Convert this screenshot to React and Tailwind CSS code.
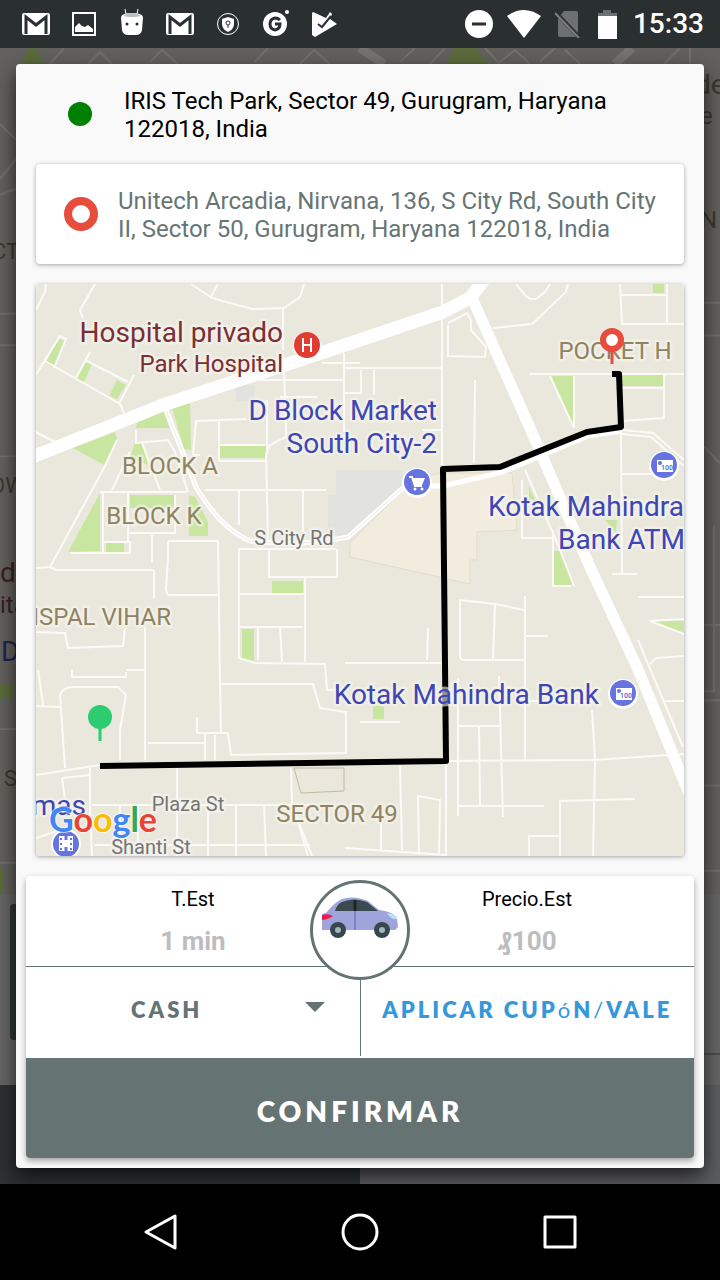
import React, { useState } from 'react';

const parks = [
    '58,338 66,342 54,367 46,363',
    '85,362 92,364 84,382 76,379',
    '117,380 126,385 117,399 109,396',
    '73,448 115,432 117,438 104,465',
    '137,423 165,410 168,425 171,428 136,428',
    '172,408 190,403 191,450 184,449',
    '135,443 142,443 148,465 130,458',
    '220,446 266,446 265,458 220,458',
    '100,493 100,551 68,552',
    '130,495 174,495 174,508 130,508',
    '189,495 195,497 208,522 208,536 189,536',
    '106,542 124,542 124,552 106,552',
    '653,284 664,284 664,293 653,293',
    '551,376 574,376 573,427',
    '622,374 663,374 663,386 622,386',
    '554,551 561,551 573,583 570,586 554,586',
    '529,486 536,502 529,500',
    '605,520 617,520 616,533',
    '272,581 303,581 303,593 272,593',
    '242,629 254,629 254,661 242,659',
    '373,706 384,706 384,719 373,719',
    '653,621 684,621 684,633'
];

const streets = [
    'M36 310 45 292 46 284M95 284 80 310 83 318M36 432 55 442M191 284 212 298 252 309 284 308 300 297 304 284M210 298 218 284',
    'M283 308V350M284 370 286 430M36 375 45 360 60 336 66 339 54 368M45 361 120 404 124 413M76 378 90 352M85 360 128 382M134 375 119 404',
    'M258 380H345M322 363H360M344 353V432M345 368H443M345 393H360M280 397H317M247 419 196 421 193 455M219 420V461M219 445H265M219 461H265',
    'M286 430V437L270 445 266 455 268 540M267 400V450M205 490H326M239 490V525M303 490V532M193 455H200',
    'M117 440 105 466 50 567 36 568M50 567 56 570 153 570M136 430V443L168 440 175 452 188 492M142 443 160 490M130 452 112 490',
    'M100 492H187M103 493V552M70 553H130V542H103M128 493V542M128 533H175V495M152 535V562M168 541H218M168 541V558L166 590 168 595H217',
    'M218 541 220 684 221 733M154 570V598M145 627V760M36 632 65 633 68 648 123 646 125 628M72 670V677H126V672M126 670H144',
    'M65 768 60 695Q62 688 72 687L118 687 126 695 120 730V760M36 706 60 707M38 670 43 705M36 775 100 765M197 717V733H228L231 755 346 753V712L320 708 313 684H221M148 743H204M205 733V760M215 735V760',
    'M239 548V658L255 663 325 664 327 690H345M240 594H305M240 549H336M269 549V577H337V549M305 577V662M240 627H303M258 627V660M280 627 282 662',
    'M177 767V856M90 768V805L92 856M62 778 90 775M62 778 65 800M92 805H310M291 768 292 805 312 856M296 815 308 856M236 804V856M264 804 266 856M208 804V856M95 845H310M36 838 60 830M120 806V845M138 806V845',
    'M460 658V600L495 604 524 610M460 658 463 660H524M495 604 493 659M525 596V760M525 636H548M446 761 593 760 684 754M592 710 595 760 593 856M446 761V856',
    'M458 678V816M499 676 503 817M458 726H502M479 726 480 805M458 806H544M635 799 560 801V856M560 836H529V856M400 766 402 850M419 855 418 796 440 800 439 855M345 848 446 855M381 815V850',
    'M345 663H443M428 628 427 660M360 722H400M638 597H684M684 634 650 621 684 619M638 640 683 747M650 664 656 658 684 656M665 701H684M612 574H637M621 430 622 573M525 701H592',
    'M442 284V465M516 284 525 295 530 299H536L545 292 550 284M568 284 566 292 532 324 493 328M620 284 622 324H684M620 295H667M667 284V323M529 374H684M574 376V428L550 376',
    'M664 375V418L622 421M622 388H664M448 325V356L485 357 486 347 471 330V320L467 313 448 323M475 380 474 463M622 430 653 433 684 460M622 434 651 437 684 466M622 474H660M361 370V394M374 370V395',
    'M522 480V538H553V586L571 586M553 530V560M525 470 556 540 574 586M422 430H443'
];

const labels = [
    { text: 'Hospital privado', x: 283, y: 342, anchor: 'end', kind: 'hospital', size: 28 },
    { text: 'Park Hospital', x: 283, y: 372, anchor: 'end', kind: 'hospital', size: 24 },
    { text: 'D Block Market', x: 437, y: 420, anchor: 'end', kind: 'place', size: 28 },
    { text: 'South City-2', x: 437, y: 453, anchor: 'end', kind: 'place', size: 28 },
    { text: 'Kotak Mahindra', x: 684, y: 516, anchor: 'end', kind: 'place', size: 28 },
    { text: 'Bank ATM', x: 685, y: 549, anchor: 'end', kind: 'place', size: 28 },
    { text: 'Kotak Mahindra Bank', x: 599, y: 704, anchor: 'end', kind: 'place', size: 28 },
    { text: 'mas', x: 86, y: 815, anchor: 'end', kind: 'place', size: 28 },
    { text: 'BLOCK A', x: 170, y: 474, anchor: 'middle', kind: 'area', size: 24 },
    { text: 'BLOCK K', x: 154, y: 524, anchor: 'middle', kind: 'area', size: 24 },
    { text: 'POCKET H', x: 615, y: 359, anchor: 'middle', kind: 'area', size: 24 },
    { text: 'ISPAL VIHAR', x: 171, y: 625, anchor: 'end', kind: 'area', size: 24 },
    { text: 'SECTOR 49', x: 337, y: 822, anchor: 'middle', kind: 'area', size: 24 },
    { text: 'S City Rd', x: 294, y: 545, anchor: 'middle', kind: 'street', size: 20 },
    { text: 'Plaza St', x: 188, y: 811, anchor: 'middle', kind: 'street', size: 20 },
    { text: 'Shanti St', x: 151, y: 854, anchor: 'middle', kind: 'street', size: 20 }
];

const labelColors = {
    hospital: '#7a2f33',
    place: '#3c46b4',
    area: '#8f8360',
    street: '#757575'
};

function RouteMap() {
    return (
        <svg viewBox="36 284 648 572" className="block w-full h-auto font-[Roboto,sans-serif]" role="img" aria-label="Mapa de la ruta">
            <rect x="36" y="284" width="648" height="572" fill="#eae8dd" />
            <polygon points="336,470 402,470 403,487 360,530 345,540 328,530 328,495 336,495" fill="#e2e3de" />
            <rect x="236" y="385" width="18" height="16" fill="#e2e3de" />
            {parks.map(points => <polygon key={points} points={points} fill="#c8e6a0" />)}
            <polygon points="443,473 512,473 517,530 477,532 477,560 470,560 470,584 350,557 350,543 403,490 403,480" fill="#f1ecde" stroke="#e4dccb" />
            <g fill="none" stroke="#fbfaf7" strokeWidth="2">
                {streets.map(d => <path key={d} d={d} />)}
            </g>
            <g fill="none" strokeLinejoin="round">
                <path d="M165 408 185 458 196 487Q220 528 250 541 300 547 348 537L405 486H443L503 472 588 436 622 431" stroke="#fff" strokeWidth="5" />
                <path d="M165 408 185 458 196 487Q220 528 250 541 300 547 348 537L405 486" stroke="#eceae3" strokeWidth="1" />
                <path d="M30 458 163 405 300 360 360 340 443 312 470 298 484 280" stroke="#fff" strokeWidth="13" />
                <path d="M472 298 530 428 590 567 637 667 690 796" stroke="#fff" strokeWidth="11" />
                <path d="M294 768H344V791L301 793Z" stroke="#c2baa0" />
            </g>

            <path d="M612 374H619L621 427 587 432 500 467 443 469 446 761 100 766" fill="none" stroke="#000" strokeWidth="6" strokeLinejoin="round" />

            {/* Labels */}
            {labels.map(label => (
                <text
                    key={label.text}
                    x={label.x}
                    y={label.y}
                    textAnchor={label.anchor}
                    fontSize={label.size}
                    fill={labelColors[label.kind]}
                    stroke="#f6f5ef"
                    strokeOpacity="0.6"
                    strokeWidth="5"
                    strokeLinejoin="round"
                    paintOrder="stroke"
                >
                    {label.text}
                </text>
            ))}

            {/* Hospital */}
            <circle cx="307" cy="346" r="14" fill="#fff" />
            <circle cx="307" cy="345" r="13" fill="#e03c31" />
            <path d="M303 338V352M311 338V352M303 345H311" stroke="#fff" strokeWidth="2" />

            {/* Market */}
            <circle cx="417" cy="483" r="15" fill="#fff" />
            <circle cx="417" cy="482" r="13" fill="#6674e0" />
            <path d="M409 477H412L415 486H422" stroke="#fff" strokeWidth="2" fill="none" />
            <path d="M412 478H425L422 485H414Z" fill="#fff" />
            <circle cx="415" cy="489" r="1.5" fill="#fff" />
            <circle cx="422" cy="489" r="1.5" fill="#fff" />

            {/* Banks */}
            {[[664, 465], [623, 693]].map(([x, y]) => (
                <g key={x}>
                    <circle cx={x} cy={y + 1} r="15" fill="#fff" />
                    <circle cx={x} cy={y} r="13" fill="#6674e0" />
                    <rect x={x - 7} y={y - 5} width="16" height="12" fill="#fff" />
                    <circle cx={x - 4} cy={y - 2} r="2" fill="#6674e0" />
                    <text x={x + 3} y={y + 5} textAnchor="middle" fontSize="7" fontWeight="500" fill="#5562d0">100</text>
                </g>
            ))}

            {/* Cinema */}
            <circle cx="66" cy="844" r="15" fill="#fff" />
            <circle cx="66" cy="844" r="13" fill="#6674e0" />
            <rect x="59" y="836" width="14" height="15" fill="#fff" />
            <path d="M61 838V850M71 838V850" stroke="#6674e0" strokeWidth="2" strokeDasharray="2 3" />
            <path d="M66 836V840M66 847V851" stroke="#6674e0" strokeWidth="3" />

            {/* Pins */}
            <path d="M612 350V364" stroke="#e74c3c" strokeWidth="3" />
            <circle cx="612" cy="340" r="9" fill="#fff" stroke="#e74c3c" strokeWidth="6" />
            <path d="M100 725V741" stroke="#2ecc71" strokeWidth="3" />
            <circle cx="100" cy="717" r="12" fill="#2ecc71" />

            <text x="49" y="832" fontSize="34" fontWeight="700" fontFamily="Lato, sans-serif" stroke="#fff" strokeOpacity="0.6" strokeWidth="2" paintOrder="stroke">
                <tspan fill="#4285f4">G</tspan>
                <tspan fill="#ea4335">o</tspan>
                <tspan fill="#fbbc05">o</tspan>
                <tspan fill="#4285f4">g</tspan>
                <tspan fill="#34a853">l</tspan>
                <tspan fill="#ea4335">e</tspan>
            </text>
        </svg>
    );
}

function GmailIcon() {
    return (
        <svg viewBox="0 0 28 24" className="w-7 h-6" fill="none">
            <rect y="1" width="28" height="22" rx="2" fill="#fff" />
            <path d="M4 22V5L14 13 24 5V22" stroke="#2a2f30" strokeWidth="3" />
        </svg>
    );
}

function StatusBar() {
    return (
        <header className="flex h-12 items-center justify-between bg-[#2a2f30] pl-3 pr-4 text-white">
            <div className="flex items-center">
                <span className="flex w-12 justify-center"><GmailIcon /></span>
                <span className="flex w-12 justify-center">
                    <svg viewBox="0 0 24 24" className="size-6" fill="none">
                        <rect x="1" y="1" width="22" height="22" stroke="#fff" strokeWidth="2" />
                        <path d="M3 20V15L7 11 10 14 13 15 16 13 21 17V20Z" fill="#fff" />
                    </svg>
                </span>
                <span className="flex w-12 justify-center pb-1">
                    <svg viewBox="0 0 24 28" className="w-6 h-7" fill="#fff">
                        <path d="M6 6 5 1M17 6 18 1" stroke="#fff" />
                        <path d="M1 9Q2 5 12 5T23 9L22 22Q21 27 16 27H8Q3 27 2 22Z" />
                        <path d="M4 7Q12 3 20 7 20 9 12 9T4 7" fill="#bcbfc0" />
                        <circle cx="7" cy="16" r="1.5" fill="#2a2f30" />
                        <circle cx="17" cy="16" r="1.5" fill="#2a2f30" />
                    </svg>
                </span>
                <span className="flex w-12 justify-center"><GmailIcon /></span>
                <span className="flex w-12 justify-center">
                    <svg viewBox="0 0 24 24" className="size-6" fill="none">
                        <circle cx="12" cy="12" r="10.5" stroke="#fff" />
                        <path d="M12 5 18 7V12Q18 17 12 20 6 17 6 12V7Z" fill="#fff" />
                        <circle cx="12" cy="11" r="2" stroke="#2a2f30" />
                        <path d="M12 13V16" stroke="#2a2f30" />
                    </svg>
                </span>
                <span className="flex w-12 justify-center pb-1">
                    <svg viewBox="0 0 28 28" className="size-7" fill="none">
                        <circle cx="13" cy="16" r="12" fill="#fff" />
                        <circle cx="25" cy="4" r="2" fill="#fff" />
                        <path d="M18 12Q16 10 13 10 8 11 8 16T13 22Q18 21 18 16H13" stroke="#2a2f30" strokeWidth="3" />
                    </svg>
                </span>
                <span className="flex w-12 justify-center">
                    <svg viewBox="0 0 28 28" className="size-7" fill="none">
                        <path d="M3 2 16 8 20 2 22 4 20 9 27 14 5 27 2 25V3Z" fill="#fff" />
                        <path d="M8 14 12 17 21 6" stroke="#2a2f30" strokeWidth="2" />
                    </svg>
                </span>
            </div>
            <div className="flex items-center gap-[14px]">
                <svg viewBox="0 0 28 28" className="size-7">
                    <circle cx="14" cy="14" r="14" fill="#fff" />
                    <path d="M7 14H21" stroke="#2a2f30" strokeWidth="3" />
                </svg>
                <svg viewBox="0 0 34 28" className="w-[34px] h-7">
                    <path d="M0 6Q17-6 34 6L17 28Z" fill="#fff" />
                </svg>
                <svg viewBox="0 0 26 28" className="w-[26px] h-7">
                    <path d="M9 1H21Q23 1 23 3V25L21 27H5Q3 27 3 25V8Z" fill="#6c7071" />
                    <path d="M1 3 25 28" stroke="#2a2f30" strokeWidth="4" />
                    <path d="M0 3 24 28" stroke="#7b7f80" strokeWidth="2" />
                </svg>
                <svg viewBox="0 0 24 30" className="w-6 h-[30px]">
                    <path d="M3 7V4H8V1H16V4H22V7Z" fill="#6c7071" />
                    <path d="M3 7H22V30H3Z" fill="#fff" />
                </svg>
                <span className="text-[28px] leading-8 font-medium">15:33</span>
            </div>
        </header>
    );
}

// dimmed booking screen that stays behind the dialog
function Backdrop() {
    return (
        <div className="absolute inset-0 flex flex-col overflow-hidden bg-[#666]" aria-hidden="true">
            <svg viewBox="0 48 720 854" preserveAspectRatio="none" className="block w-full flex-[854]">
                <rect y="48" width="720" height="854" fill="#63615d" />
                <path d="M20 64 30 48H36L44 64ZM446 64 455 48H475L488 64H448ZM0 690H14V704H0ZM0 876H4V902H0Z" fill="#5c6b3c" />
                <path d="M360 48 384 64M615 64 632 48" stroke="#75736f" strokeWidth="9" />
                <path d="M50 64 64 48M88 64 100 52 112 64M150 62 162 50 178 64M255 62 268 48M300 64 314 50 330 64M400 62 415 48M430 64 445 48M485 48 500 64M500 62 515 50 530 64M540 62 555 48M580 64 565 50M664 64 680 48M690 48V64M0 125 18 142M0 180 16 160M0 196 16 190M0 316H16M0 348H16M0 460H16M0 735H16M0 870H16M704 305H720M704 338H720M704 450 720 467M704 630H720M714 530V697H704M704 706H720M704 792H720M704 878H720" fill="none" stroke="#73716d" strokeWidth="2" />
                <g fontSize="24" fill="#3c3830">
                    <text x="-8" y="261" fontSize="22">CT</text>
                    <text x="-10" y="497" fontSize="22">OW</text>
                    <text x="0" y="587" fontSize="28" fill="#3a1f20">d</text>
                    <text x="0" y="618" fill="#3a1f20">ita</text>
                    <text x="1" y="666" fontSize="28" fill="#1d2158">D</text>
                    <text x="4" y="793" fontSize="22">S</text>
                    <text x="695" y="94" fontSize="28">de</text>
                    <text x="700" y="125">e</text>
                    <text x="700" y="230">N</text>
                </g>
            </svg>
            <div className="flex flex-[182] justify-between pt-[10px]">
                <div className="h-3/4 w-8 ml-[10px] rounded bg-[#303536]" />
                <div className="h-5/6 w-8 border-b-2 border-[#4d4d4d]" />
            </div>
            <div className="flex flex-[100]">
                <div className="flex-1 bg-[#2d3132]" />
                <div className="flex-1 bg-[#5c5d5f]" />
            </div>
        </div>
    );
}

function CarBadge() {
    return (
        <div className="absolute left-1/2 top-1 flex size-[100px] -translate-x-1/2 justify-center rounded-full border-3 border-[#667373] bg-white pt-[14px]">
            <svg viewBox="0 0 76 42" className="w-[76px] h-[42px]">
                <path d="M0 17 4 16Q13 5 20 2 32-2 46 4L57 13Q70 14 75 21L76 30 73 33H0Z" fill="#9fa4db" />
                <path d="M13 14Q15 7 20 5 32 0 45 5L56 14Z" fill="#3a4a50" />
                <path d="M33 3V14" stroke="#1d2529" strokeWidth="3" />
                <path d="M33 14V33" stroke="#7c80c4" strokeWidth="2" />
                <path d="M0 18Q6 16 11 19 7 22 0 23Z" fill="#f5154f" />
                <path d="M65 16Q74 17 75 22 69 23 65 16" fill="#b9e2f8" />
                <circle cx="16" cy="33" r="8" fill="#37474f" />
                <circle cx="16" cy="33" r="3" fill="#a5b5ba" />
                <circle cx="60" cy="33" r="8" fill="#37474f" />
                <circle cx="60" cy="33" r="3" fill="#a5b5ba" />
            </svg>
        </div>
    );
}

function NavBar() {
    return (
        <nav className="flex h-24 items-center bg-black px-[60px]">
            <button aria-label="Atrás" className="flex flex-1 justify-center">
                <svg viewBox="0 0 36 40" className="w-9 h-10" fill="none" stroke="#fff" strokeWidth="3" strokeLinejoin="round">
                    <path d="M33 4V36L4 20Z" />
                </svg>
            </button>
            <button aria-label="Inicio" className="flex flex-1 justify-center">
                <svg viewBox="0 0 40 40" className="size-10" fill="none" stroke="#fff" strokeWidth="3">
                    <circle cx="20" cy="20" r="17" />
                </svg>
            </button>
            <button aria-label="Recientes" className="flex flex-1 justify-center">
                <svg viewBox="0 0 40 40" className="size-10" fill="none" stroke="#fff" strokeWidth="3" strokeLinejoin="round">
                    <rect x="5" y="5" width="30" height="30" />
                </svg>
            </button>
        </nav>
    );
}

export default function App() {
    const [payment, setPayment] = useState('CASH');

    return (
        <div className="flex min-h-screen flex-col bg-black font-[Roboto,sans-serif]">
            <StatusBar />
            <main className="relative flex-1 overflow-hidden p-4">
                <Backdrop />
                <div role="dialog" aria-label="Confirmar viaje" className="relative rounded bg-[#f9f9f9] p-[10px] shadow-[0_8px_20px_rgba(0,0,0,0.7)]">
                    <div className="px-[10px]">
                        {/* Origin */}
                        <div className="flex h-[90px] items-center pb-[10px] pl-8">
                            <span className="mr-8 size-6 shrink-0 rounded-full bg-[#008000]" />
                            <p className="pt-[2px] text-2xl leading-7 text-black">IRIS Tech Park, Sector 49, Gurugram, Haryana 122018, India</p>
                        </div>

                        {/* Destination */}
                        <div className="flex h-[100px] items-center rounded bg-white pl-7 pr-4 shadow-[0_1px_4px_rgba(0,0,0,0.35)]">
                            <span className="mr-5 size-[34px] shrink-0 rounded-full border-8 border-[#e74c3c]" />
                            <p className="pt-[2px] text-2xl leading-7 text-[#667575]">Unitech Arcadia, Nirvana, 136, S City Rd, South City II, Sector 50, Gurugram, Haryana 122018, India</p>
                        </div>

                        <div className="mt-5 overflow-hidden rounded shadow-[0_1px_4px_rgba(0,0,0,0.35)]">
                            <RouteMap />
                        </div>
                    </div>

                    {/* Fare and payment */}
                    <div className="relative mt-5 overflow-hidden rounded bg-white shadow-[0_3px_6px_rgba(0,0,0,0.35)]">
                        <div className="grid h-[91px] grid-cols-2 border-b border-[#667373] text-center">
                            <div className="flex flex-col gap-[14px] pt-[11px]">
                                <span className="text-xl leading-6 text-black">T.Est</span>
                                <span className="text-[26px] leading-8 font-bold text-[#bdbdbd]">1 min</span>
                            </div>
                            <div className="flex flex-col gap-[14px] pt-[11px]">
                                <span className="text-xl leading-6 text-black">Precio.Est</span>
                                <span className="text-[26px] leading-8 font-bold text-[#bdbdbd]">₰100</span>
                            </div>
                        </div>
                        <div className="flex h-[91px] pb-[2px] font-[Lato,sans-serif] text-[22px] font-extrabold">
                            <div className="relative flex-1 border-r border-[#667373]">
                                <select
                                    aria-label="Forma de pago"
                                    value={payment}
                                    onChange={(e) => setPayment(e.target.value)}
                                    className="h-[84px] w-full appearance-none pl-1 pr-14 text-center tracking-[3px] text-[#667373]"
                                >
                                    <option>CASH</option>
                                </select>
                                <svg viewBox="0 0 20 10" className="pointer-events-none absolute right-[35px] top-[35px] w-5 h-[10px]">
                                    <path d="M0 0H20L10 10Z" fill="#667373" />
                                </svg>
                            </div>
                            <button className="h-[84px] flex-1 whitespace-nowrap tracking-[3px] text-[#3498db]">
                                APLICAR CUP<span className="font-normal">ó</span>N<span className="font-normal">/</span>VALE
                            </button>
                        </div>
                        <button className="block h-[100px] w-full bg-[#667373] pt-[6px] font-[Lato,sans-serif] text-[28px] font-extrabold tracking-[4px] text-white">
                            CONFIRMAR
                        </button>
                        <CarBadge />
                    </div>
                </div>
            </main>
            <NavBar />
        </div>
    );
}
